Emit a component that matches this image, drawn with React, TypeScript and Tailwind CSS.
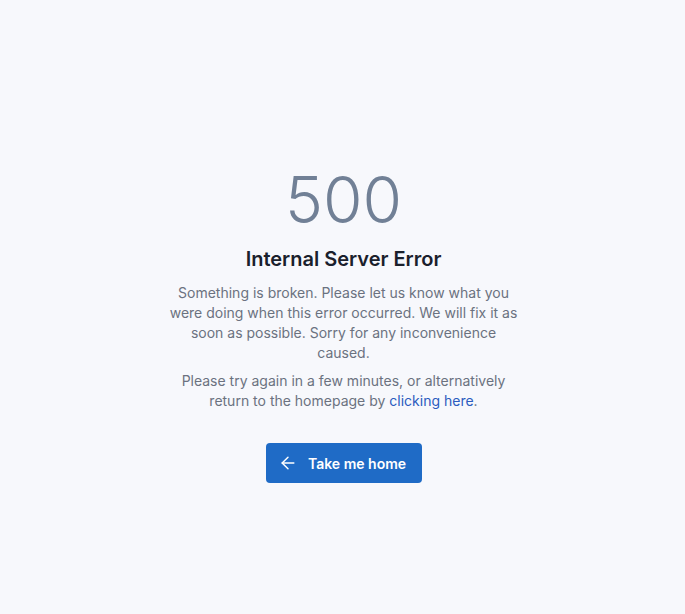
import { ArrowLeft } from 'lucide-react';

export default function App() {
  return (
    <div className="min-h-screen bg-[#f7f8fc] font-['Inter','Liberation_Sans',sans-serif]">
      <div className="flex flex-col items-center pt-[168px] text-center">
        <div className="pl-[2px] text-[64px] font-light leading-none text-[#718096]">500</div>
        <h1 className="ml-[2px] mt-[13px] text-[20px] font-semibold leading-[28px] text-[#1a202c]">
          Internal Server Error
        </h1>
        <p className="mt-[10px] max-w-[352px] pl-[2px] text-[14px] leading-[20px] text-[#6b7280]">
          Something is broken. Please let us know what you were doing when this error occurred. We will fix it as soon as possible. Sorry for any inconvenience caused.
        </p>
        <p className="mt-[8px] max-w-[352px] pl-[2px] text-[14px] leading-[20px] text-[#6b7280]">
          Please try again in a few minutes, or alternatively return to the homepage by{' '}
          <a href="#" className="text-[#2b5cbf]">clicking here</a>.
        </p>
        <button className="ml-[3px] mt-[32px] flex h-[40px] items-center gap-[10px] rounded-[4px] bg-[#1f6bc6] pl-3 pr-4 text-[14px] font-semibold text-white">
          <ArrowLeft size={20} strokeWidth={1.75} />
          Take me home
        </button>
      </div>
    </div>
  );
}
